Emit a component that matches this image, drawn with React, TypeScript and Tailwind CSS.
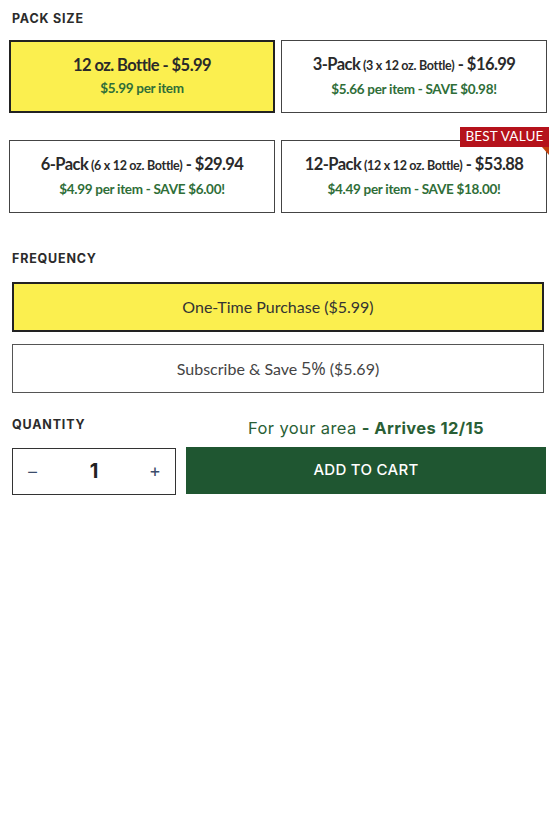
import React from "react";

const lato = { fontFamily: "Lato, 'Open Sans', sans-serif" };

function PackCard({
  title,
  sub,
  price,
  line2,
  selected,
  badge,
}: {
  title: string;
  sub?: string;
  price: string;
  line2: string;
  selected?: boolean;
  badge?: boolean;
}) {
  return (
    <div
      className={
        "relative flex h-[73px] flex-col items-center justify-center " +
        (selected
          ? "border-2 border-[#222222] bg-[#fbef4f]"
          : "border border-[#444444] bg-white")
      }
      style={lato}
    >
      <div className="mt-[-2px] text-[16.5px] font-bold leading-[20px] tracking-[-0.55px] text-[#2a2a2a]">
        {title}
        {sub && (
          <span className="text-[12.5px] tracking-[-0.3px]"> {sub}</span>
        )}{" "}
        - {price}
      </div>
      <div className="mt-[5px] text-[13.5px] font-bold leading-[16px] tracking-[-0.3px] text-[#2f6e38]">
        {line2}
      </div>
      {badge && (
        <div className="absolute right-[-3px] top-[-14px]">
          <div className="flex h-[20px] w-[89px] items-center justify-center bg-[#b5121b] text-[13.5px] leading-none tracking-[0.2px] text-white" style={lato}>
            BEST VALUE
          </div>
          <div className="ml-auto h-0 w-0 border-l-[7px] border-t-[8px] border-l-transparent border-t-[#c0410e]" />
        </div>
      )}
    </div>
  );
}

export default function App() {
  const label =
    "text-[12.5px] font-bold uppercase tracking-[0.8px] text-[#2b2b2b] leading-none";
  const labelFont = { fontFamily: "Inter, 'DejaVu Sans', sans-serif" };
  return (
    <div className="h-[840px] w-[560px] bg-white pl-[9px] pr-[13px] pt-[13px]">
      <div className={label + " ml-[3px]"} style={labelFont}>
        Pack Size
      </div>
      <div className="mt-[14px] grid grid-cols-2 gap-x-[6px] gap-y-[27px]">
        <PackCard title="12 oz. Bottle" price="$5.99" line2="$5.99 per item" selected />
        <PackCard title="3-Pack" sub="(3 x 12 oz. Bottle)" price="$16.99" line2="$5.66 per item - SAVE $0.98!" />
        <PackCard title="6-Pack" sub="(6 x 12 oz. Bottle)" price="$29.94" line2="$4.99 per item - SAVE $6.00!" />
        <PackCard title="12-Pack" sub="(12 x 12 oz. Bottle)" price="$53.88" line2="$4.49 per item - SAVE $18.00!" badge />
      </div>

      <div className={label + " mt-[40px] ml-[3px]"} style={labelFont}>
        Frequency
      </div>
      <div className="mt-[17px] mx-[3px] flex flex-col gap-[12px]">
        <div
          className="flex h-[50px] items-center justify-center border-2 border-[#222222] bg-[#fbef4f] text-[16px] text-[#333333]"
          style={lato}
        >
          One-Time Purchase ($5.99)
        </div>
        <div
          className="flex h-[49px] items-center justify-center border border-[#555555] bg-white text-[16px] text-[#444444]"
          style={lato}
        >
          Subscribe &amp; Save{" "}
          <span className="mx-[4px] text-[17.5px]" style={{ fontFamily: "'Open Sans', sans-serif" }}>
            5%
          </span>
          ($5.69)
        </div>
      </div>

      <div className="mt-[25px] ml-[3px] mr-[1px] flex gap-[10px]">
        <div className="flex w-[164px] flex-col">
          <div className={label + " mt-[1px]"} style={labelFont}>
            Quantity
          </div>
          <div className="mt-[16px] flex h-[47px] items-center justify-between border border-[#333333] pl-[13px] pr-[14px]">
            <span className="text-[20px] font-light leading-none text-[#3b4c6b]" style={labelFont}>
              −
            </span>
            <span className="text-[20px] font-bold leading-none text-[#222222]" style={labelFont}>
              1
            </span>
            <span className="text-[18px] leading-none text-[#3b4c6b]" style={labelFont}>
              +
            </span>
          </div>
        </div>
        <div className="flex flex-1 flex-col">
          <div
            className="text-center text-[16.5px] leading-[20px] tracking-[0.4px] text-[#2a5f36]"
            style={labelFont}
          >
            For your area <span className="font-bold">- Arrives 12/15</span>
          </div>
          <div
            className="mt-[9px] flex h-[47px] items-center justify-center bg-[#1f5631] text-[15px] font-medium tracking-[0.3px] text-white"
            style={labelFont}
          >
            ADD TO CART
          </div>
        </div>
      </div>
    </div>
  );
}
